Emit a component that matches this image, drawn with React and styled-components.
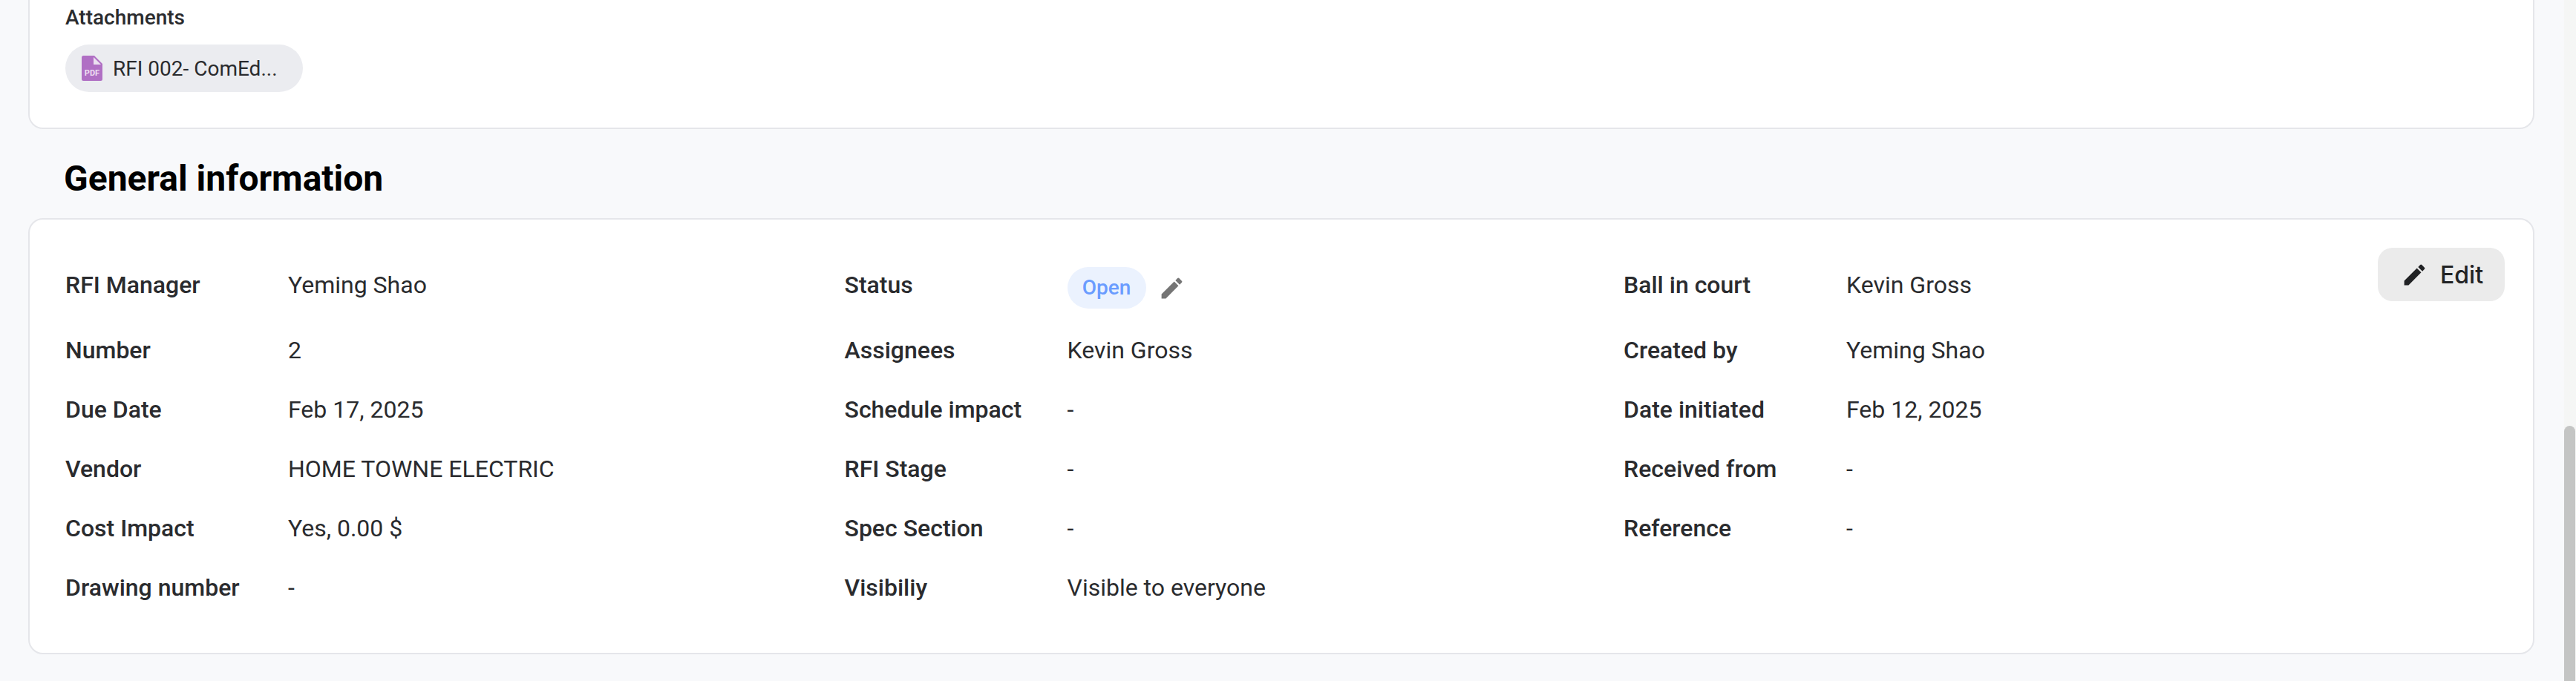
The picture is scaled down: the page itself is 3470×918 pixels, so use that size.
import React from "react";
import styled, { createGlobalStyle } from "styled-components";
import { MdEdit } from "react-icons/md";

const GlobalStyle = createGlobalStyle`
  html, body {
    margin: 0;
    padding: 0;
    background: #f8f9fb;
    overflow: hidden;
  }
  * { box-sizing: border-box; }
`;

const Page = styled.div`
  width: 3470px;
  height: 918px;
  display: flex;
  overflow: hidden;
  font-family: Roboto, "Liberation Sans", sans-serif;
  color: #2a2b2e;
  background: #f8f9fb;
`;
const Content = styled.main`
  flex: 1;
  min-width: 0;
  padding: 0 40px 0 38px;
`;
const ScrollTrack = styled.div`
  width: 16px;
  height: 100%;
  padding-top: 574px;
  background: #f5f6f5;
`;
const ScrollThumb = styled.div`
  width: 15px;
  height: 100%;
  background: #c4c5c4;
  border-radius: 8px 8px 0 0;
`;
const AttachCard = styled.section`
  height: 174px;
  padding: 4px 48px 0;
  background: #fff;
  border: 2px solid #e5e6ea;
  border-top: none;
  border-radius: 0 0 20px 20px;
`;
const AttachTitle = styled.div`
  font-size: 28px;
  font-weight: 500;
  line-height: 40px;
`;
const Chip = styled.div`
  width: 320px;
  height: 64px;
  margin-top: 16px;
  padding-left: 22px;
  display: flex;
  align-items: center;
  gap: 14px;
  background: #ebecf0;
  border-radius: 32px;
  font-size: 28px;
  color: #2a2b2e;
`;
const Heading = styled.h2`
  margin: 0;
  height: 120px;
  padding: 39px 0 0 48px;
  font-size: 48px;
  line-height: 56px;
  font-weight: 700;
  color: #000;
`;
const InfoCard = styled.section`
  height: 588px;
  padding: 38px 38px 0 48px;
  display: flex;
  align-items: flex-start;
  background: #fff;
  border: 2px solid #e5e6ea;
  border-radius: 20px;
`;
const InfoGrid = styled.div`
  flex: 1;
  margin-top: 26px;
  display: grid;
  grid-template-columns: 300px 749.5px 300px 749.5px 300px 1fr;
  row-gap: 32px;
  align-items: start;
  font-size: 32px;
  line-height: 48px;
`;
const Label = styled.div`
  font-weight: 500;
`;
const Value = styled.div`
  font-weight: 400;
`;
const StatusValue = styled.div`
  display: flex;
  align-items: center;
  gap: 16px;
`;
const Pill = styled.span`
  width: 106px;
  height: 56px;
  display: flex;
  align-items: center;
  justify-content: center;
  background: #ebf2fe;
  border-radius: 28px;
  font-size: 28px;
  font-weight: 500;
  color: #6a9cff;
`;
const PencilIcon = styled(MdEdit)`
  width: 37px;
  height: 37px;
  color: #757575;
`;
const EditButton = styled.button`
  width: 171px;
  height: 72px;
  padding: 0 0 0 31px;
  flex-shrink: 0;
  display: flex;
  align-items: center;
  gap: 16px;
  border: none;
  background: #ebebeb;
  border-radius: 20px;
  font-family: Inter, Roboto, sans-serif;
  font-size: 32px;
  font-weight: 500;
  color: #212224;
`;
const EditIcon = styled(MdEdit)`
  width: 37px;
  height: 37px;
`;

const rows = [
  [["RFI Manager", "Yeming Shao"], ["Status", null], ["Ball in court", "Kevin Gross"]],
  [["Number", "2"], ["Assignees", "Kevin Gross"], ["Created by", "Yeming Shao"]],
  [["Due Date", "Feb 17, 2025"], ["Schedule impact", "-"], ["Date initiated", "Feb 12, 2025"]],
  [["Vendor", "HOME TOWNE ELECTRIC"], ["RFI Stage", "-"], ["Received from", "-"]],
  [["Cost Impact", "Yes, 0.00 $"], ["Spec Section", "-"], ["Reference", "-"]],
  [["Drawing number", "-"], ["Visibiliy", "Visible to everyone"], ["", ""]],
];

const PdfIcon = () => (
  <svg width="28" height="34" viewBox="0 0 28 34">
    <path
      d="M2.5 0H17L28 11V31.5A2.5 2.5 0 0 1 25.500 34H2.500A2.500 2.500 0 0 1 0 31.500V2.500A2.500 2.500 0 0 1 2.500 0Z"
      fill="#b06fc4"
    />
    <path d="M16 2V12H26Z" fill="#ebe0f0" />
    <text
      x="14"
      y="27"
      textAnchor="middle"
      fontFamily="Roboto, sans-serif"
      fontSize="11"
      fontWeight="700"
      fill="#eddff2"
    >
      PDF
    </text>
  </svg>
);

const App = () => {
  return (
    <Page>
      <GlobalStyle />
      <Content>
        <AttachCard>
          <AttachTitle>Attachments</AttachTitle>
          <Chip>
            <PdfIcon />
            RFI 002- ComEd...
          </Chip>
        </AttachCard>
        <Heading>General information</Heading>
        <InfoCard>
          <InfoGrid>
            {rows.flat().map(([label, value], i) => (
              <React.Fragment key={i}>
                <Label>{label}</Label>
                {value === null ? (
                  <StatusValue>
                    <Pill>Open</Pill>
                    <PencilIcon />
                  </StatusValue>
                ) : (
                  <Value>{value}</Value>
                )}
              </React.Fragment>
            ))}
          </InfoGrid>
          <EditButton>
            <EditIcon />
            Edit
          </EditButton>
        </InfoCard>
      </Content>
      <ScrollTrack>
        <ScrollThumb />
      </ScrollTrack>
    </Page>
  );
};

export default App;
